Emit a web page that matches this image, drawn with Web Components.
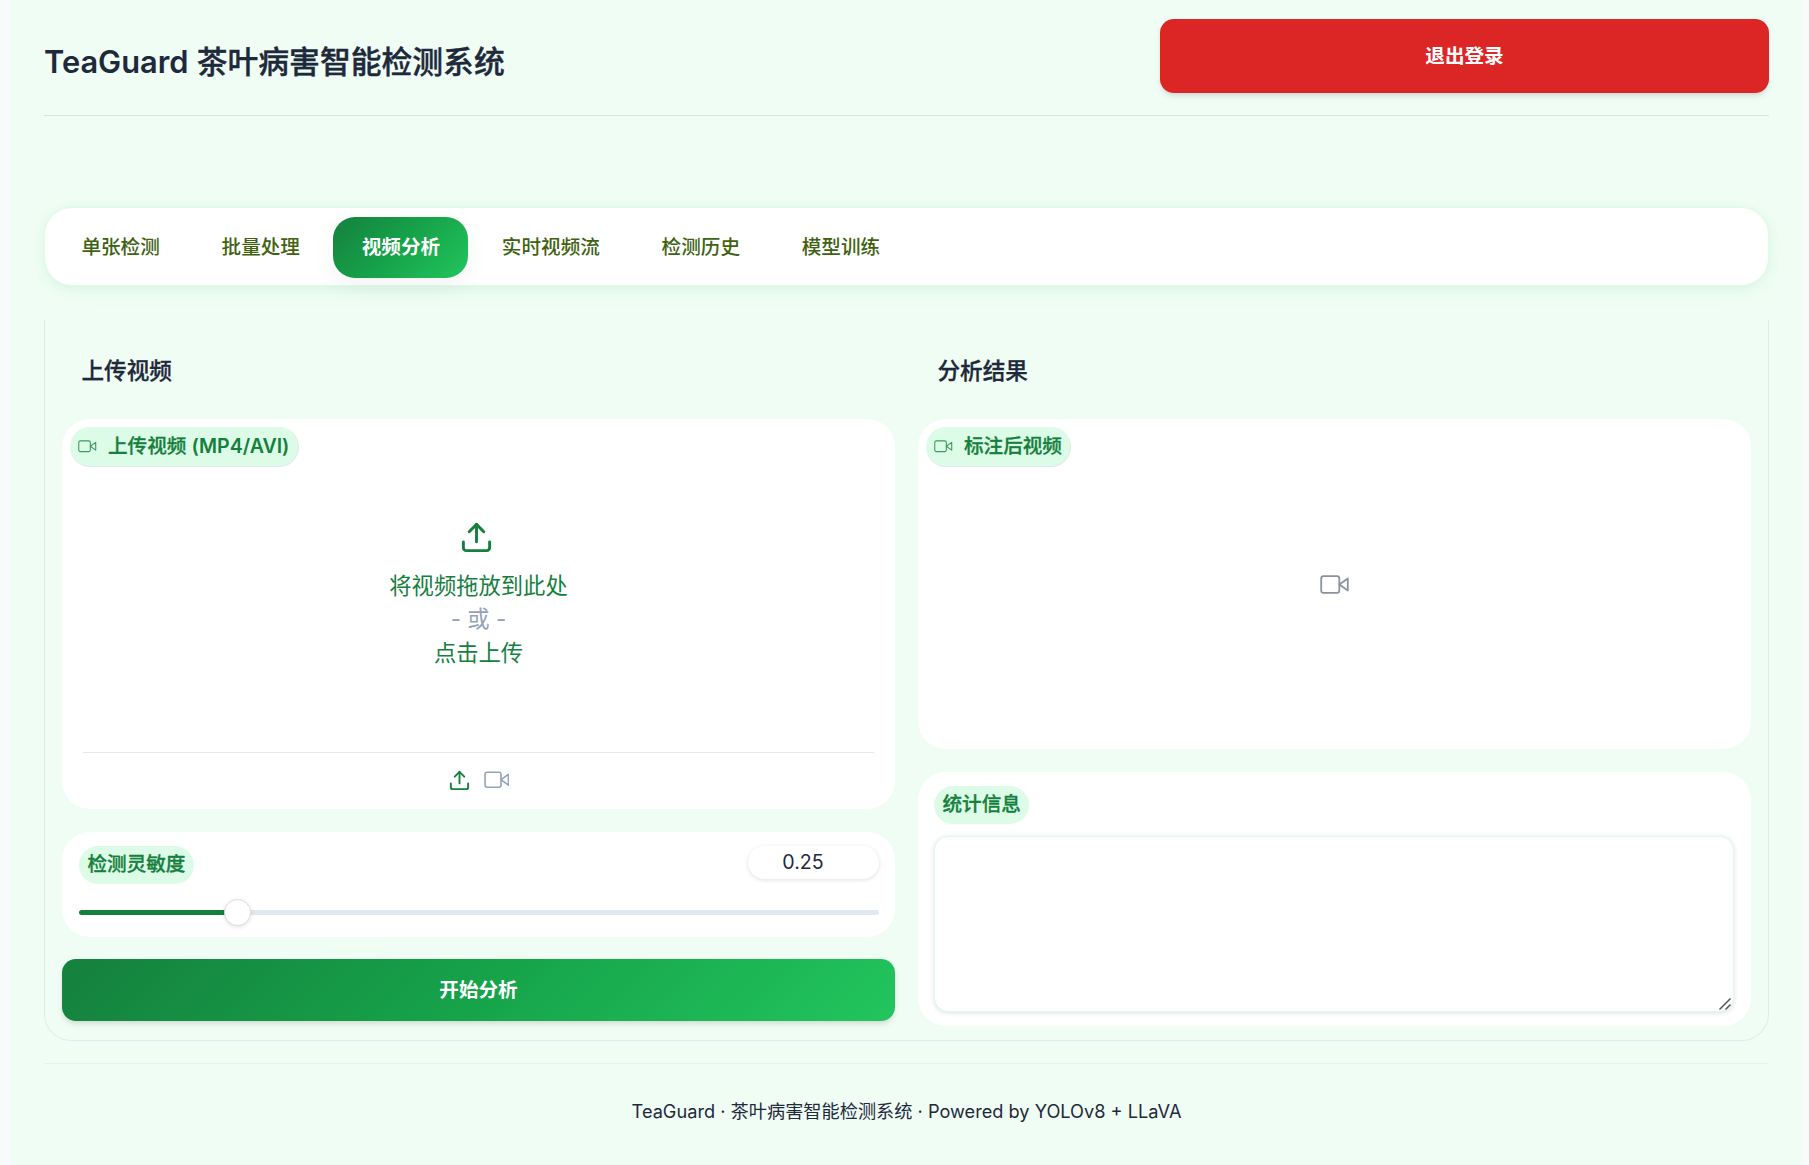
<!DOCTYPE html>
<html lang="zh-CN">
<head>
  <meta charset="UTF-8">
  <meta name="viewport" content="width=device-width, initial-scale=1.0">
  <title>TeaGuard 茶叶病害智能检测系统</title>
  <style>
    body {
      margin: 0;
      background-color: #f8fafc;
      color: #1e293b;
      font-family: Inter, "Noto Sans CJK SC", sans-serif;
      font-size: 19.6px;
      --green: #15803d;
      --mint: #dcfce7;
      --line: #e2e8f0;
      --grad: linear-gradient(135deg, #15803d 0%, #16a34a 50%, #22c55e 100%);
    }
    b { font-weight: 600; -webkit-text-stroke: 0; }
  </style>
</head>
<body>

<tea-app>
  <tea-header>
    <b>TeaGuard</b> 茶叶病害智能检测系统
    <tea-button slot="action" variant="stop">退出登录</tea-button>
  </tea-header>

  <tea-tabs>
    <tea-tab>单张检测</tea-tab>
    <tea-tab>批量处理</tea-tab>
    <tea-tab active>视频分析</tea-tab>
    <tea-tab>实时视频流</tea-tab>
    <tea-tab>检测历史</tea-tab>
    <tea-tab>模型训练</tea-tab>
  </tea-tabs>

  <tea-panel>
    <tea-column heading="上传视频">
      <tea-upload label="上传视频 <b>(MP4/AVI)</b>"></tea-upload>
      <tea-slider label="检测灵敏度" value="0.25" min="0.1" max="0.9"></tea-slider>
      <tea-button>开始分析</tea-button>
    </tea-column>
    <tea-column heading="分析结果">
      <tea-video label="标注后视频"></tea-video>
      <tea-textbox label="统计信息"></tea-textbox>
    </tea-column>
  </tea-panel>

  <tea-footer>TeaGuard · 茶叶病害智能检测系统 · Powered by YOLOv8 + LLaVA</tea-footer>
</tea-app>

<script>
// Clase base: adjunta el shadow root con el estilo y el marcado
class TeaElement extends HTMLElement {
  constructor() {
    super();
    this.attachShadow({ mode: 'open' });
  }

  connectedCallback() {
    this.shadowRoot.innerHTML = `<style>
      * { box-sizing: border-box; }
      :host { display: block; box-sizing: border-box; }
      b { font-weight: 600; -webkit-text-stroke: 0; }
      ${this.css()}
    </style>${this.html()}`;
  }

  css() { return ''; }
  html() { return '<slot></slot>'; }
}

class TeaApp extends TeaElement {
  css() {
    return `:host {
      width: 1792px;
      height: 1165px;
      margin-left: 11px;
      padding: 19px 34px 0 33px;
      background-color: #f0fdf4;
    }`;
  }
}

class TeaHeader extends TeaElement {
  css() {
    return `
      :host {
        display: flex;
        justify-content: space-between;
        height: 97px;
        border-bottom: 1px solid #d9e4dd;
      }
      h1 {
        margin: 22px 0 0;
        font-size: 30.8px;
        line-height: 42px;
        font-weight: 500;
        -webkit-text-stroke: 0.4px;
        white-space: nowrap;
      }
      ::slotted(tea-button) { width: 609px; height: 74px; }`;
  }
  html() {
    return '<h1><slot></slot></h1><slot name="action"></slot>';
  }
}

class TeaButton extends TeaElement {
  css() {
    return `
      :host { height: 62px; }
      button {
        display: block;
        width: 100%;
        height: 100%;
        border: none;
        border-radius: 14px;
        padding: 0 0 4px;
        background: var(--grad);
        box-shadow: 0 4px 6px -1px rgba(0, 0, 0, 0.1), 0 2px 4px -1px rgba(0, 0, 0, 0.06);
        color: white;
        font: inherit;
        font-weight: 600;
      }
      :host([variant="stop"]) button { background: #dc2626; }`;
  }
  html() {
    return '<button><slot></slot></button>';
  }
}

class TeaTabs extends TeaElement {
  css() {
    return `:host {
      display: flex;
      gap: 5px;
      height: 79px;
      margin-top: 91px;
      padding: 9px 8px;
      border: 1px solid var(--mint);
      border-radius: 28px;
      background-color: white;
      box-shadow: 0 4px 20px rgba(34, 197, 94, 0.07), 0 2px 8px rgba(22, 101, 52, 0.04);
    }`;
  }
}

class TeaTab extends TeaElement {
  css() {
    return `
      :host {
        height: 61px;
        padding: 0 28.4px;
        border-radius: 22px;
        color: #3f6212;
        font-weight: 500;
        line-height: 60px;
        white-space: nowrap;
      }
      :host([active]) {
        background: var(--grad);
        box-shadow: 0 8px 25px rgba(0, 0, 0, 0.05);
        color: white;
        font-weight: 600;
      }`;
  }
}

class TeaPanel extends TeaElement {
  css() {
    return `:host {
      display: grid;
      grid-template-columns: 833px 833px;
      gap: 23px;
      height: 721px;
      margin-top: 34px;
      padding: 0 17px;
      border: 1px solid var(--line);
      border-top: none;
      border-radius: 0 0 27px 27px;
    }`;
  }
}

class TeaColumn extends TeaElement {
  css() {
    return `
      :host { display: flex; flex-direction: column; gap: 22.5px; }
      h3 {
        margin: 34px 0 8.5px;
        padding-left: 19.5px;
        font-size: 22.6px;
        line-height: 34px;
        font-weight: 500;
        -webkit-text-stroke: 0.3px;
      }`;
  }
  html() {
    return `<h3>${this.getAttribute('heading')}</h3><slot></slot>`;
  }
}

const ICONS = {
  video: '<polygon points="23 7 16 12 23 17 23 7"/><rect x="1" y="5" width="15" height="14" rx="2" ry="2"/>',
  upload: '<path d="M21 15v4a2 2 0 0 1-2 2H5a2 2 0 0 1-2-2v-4"/><polyline points="17 8 12 3 7 8"/><line x1="12" y1="3" x2="12" y2="15"/>'
};

class TeaIcon extends TeaElement {
  css() {
    return `
      :host { display: inline-block; flex: none; }
      svg { display: block; }`;
  }
  html() {
    const size = this.getAttribute('size');
    return `<svg width="${size}" height="${size}" viewBox="0 0 24 24" fill="none" stroke="currentColor"
      stroke-width="${this.getAttribute('stroke') || 1.5}" stroke-linecap="round" stroke-linejoin="round">
      ${ICONS[this.getAttribute('name')]}</svg>`;
  }
}

// Etiqueta verde; con icono lleva además una línea fina abajo
class TeaLabel extends TeaElement {
  css() {
    return `
      :host {
        display: inline-flex;
        align-items: center;
        height: 38px;
        padding: 0 8.5px;
        border-radius: 19px;
        background-color: var(--mint);
        color: var(--green);
        font-weight: 500;
        -webkit-text-stroke: 0.3px;
        line-height: 36px;
        white-space: nowrap;
        vertical-align: top;
      }
      span { padding-bottom: 2px; }
      :host([icon]) {
        height: 40px;
        padding: 0 8.5px 0 8px;
        border: solid var(--line);
        border-width: 0 1px 1px 0;
        border-radius: 20px;
      }
      tea-icon { margin-right: 11.5px; opacity: 0.8; }`;
  }
  html() {
    const icon = this.hasAttribute('icon') ? '<tea-icon name="video" size="18.5" stroke="1.4"></tea-icon>' : '';
    return `${icon}<span><slot></slot></span>`;
  }
}

const CARD = 'background-color: white; border-radius: 28px;';

class TeaUpload extends TeaElement {
  css() {
    return `
      :host { ${CARD} display: flex; flex-direction: column; height: 390px; padding: 8px 21px 0; }
      tea-label { align-self: flex-start; margin-left: -13px; }
      .drop {
        display: flex;
        flex-direction: column;
        align-items: center;
        height: 286px;
        padding-top: 52.5px;
        border-bottom: 1px solid var(--line);
        color: var(--green);
        font-size: 22.3px;
        line-height: 33.5px;
      }
      .drop tea-icon { margin: 0 3.5px 14px 0; }
      .or { color: #94a3b8; }
      .sources {
        display: flex;
        justify-content: center;
        align-items: center;
        gap: 13px;
        height: 54px;
        color: #94a3b8;
      }
      .sources .on { color: var(--green); }`;
  }
  html() {
    return `
      <tea-label icon>${this.getAttribute('label')}</tea-label>
      <div class="drop">
        <tea-icon name="upload" size="35" stroke="2"></tea-icon>
        <div>将视频拖放到此处</div>
        <div class="or">- 或 -</div>
        <div>点击上传</div>
      </div>
      <div class="sources">
        <tea-icon class="on" name="upload" size="23" stroke="2"></tea-icon>
        <tea-icon name="video" size="25.5"></tea-icon>
      </div>`;
  }
}

class TeaSlider extends TeaElement {
  css() {
    const { min, max, value } = this.range();
    const pct = (value - min) / (max - min) * 100;
    return `
      :host { ${CARD} height: 105px; padding: 14px 16px 0 17px; }
      .head { display: flex; justify-content: space-between; align-items: flex-start; }
      .num {
        width: 131px;
        height: 33px;
        padding-right: 21px;
        border-radius: 17px;
        box-shadow: 0 1px 4px rgba(0, 0, 0, 0.13);
        line-height: 33px;
        text-align: center;
      }
      input {
        -webkit-appearance: none;
        appearance: none;
        display: block;
        width: 100%;
        height: 27px;
        margin: 15px 0 0;
        background: transparent;
      }
      input::-webkit-slider-runnable-track {
        height: 5px;
        border-radius: 3px;
        background: linear-gradient(to right, var(--green) ${pct}%, var(--line) ${pct}%);
      }
      input::-webkit-slider-thumb {
        -webkit-appearance: none;
        width: 27px;
        height: 27px;
        margin-top: -11px;
        border: 1px solid #dedede;
        border-radius: 50%;
        background: white;
        box-shadow: 0 1px 4px rgba(0, 0, 0, 0.12);
      }`;
  }
  range() {
    return {
      min: +this.getAttribute('min'),
      max: +this.getAttribute('max'),
      value: +this.getAttribute('value')
    };
  }
  html() {
    const { min, max, value } = this.range();
    return `
      <div class="head">
        <tea-label>${this.getAttribute('label')}</tea-label>
        <div class="num">${value}</div>
      </div>
      <input type="range" min="${min}" max="${max}" step="0.01" value="${value}">`;
  }
}

class TeaVideo extends TeaElement {
  css() {
    return `
      :host { ${CARD} height: 330px; padding: 8px; }
      .empty {
        display: flex;
        justify-content: center;
        align-items: center;
        height: 234px;
        color: #8b93a1;
      }`;
  }
  html() {
    return `
      <tea-label icon>${this.getAttribute('label')}</tea-label>
      <div class="empty"><tea-icon name="video" size="29"></tea-icon></div>`;
  }
}

class TeaTextbox extends TeaElement {
  css() {
    return `
      :host { ${CARD} height: 254px; padding: 14px 17px 0 16px; }
      .box { position: relative; margin-top: 12px; }
      textarea {
        display: block;
        width: 100%;
        height: 176px;
        border: 1px solid var(--mint);
        border-radius: 14px;
        outline: none;
        resize: none;
        background: white;
        box-shadow: 0 1px 5px rgba(0, 0, 0, 0.12);
        font: inherit;
      }
      svg { position: absolute; right: 2px; bottom: 1px; }`;
  }
  html() {
    return `
      <tea-label>${this.getAttribute('label')}</tea-label>
      <div class="box">
        <textarea></textarea>
        <svg width="14" height="14" viewBox="0 0 14 14" stroke="#555" stroke-width="1.5">
          <path d="M1.5 12.5 12.5 1.5M7.5 12.5 12.5 7.5"/>
        </svg>
      </div>`;
  }
}

class TeaFooter extends TeaElement {
  css() {
    return `:host {
      margin-top: 22px;
      padding-top: 33px;
      border-top: 1px solid #dff7e8;
      font-size: 18.2px;
      line-height: 28px;
      text-align: center;
    }`;
  }
}

customElements.define('tea-app', TeaApp);
customElements.define('tea-header', TeaHeader);
customElements.define('tea-button', TeaButton);
customElements.define('tea-tabs', TeaTabs);
customElements.define('tea-tab', TeaTab);
customElements.define('tea-panel', TeaPanel);
customElements.define('tea-column', TeaColumn);
customElements.define('tea-icon', TeaIcon);
customElements.define('tea-label', TeaLabel);
customElements.define('tea-upload', TeaUpload);
customElements.define('tea-slider', TeaSlider);
customElements.define('tea-video', TeaVideo);
customElements.define('tea-textbox', TeaTextbox);
customElements.define('tea-footer', TeaFooter);
</script>

</body>
</html>
